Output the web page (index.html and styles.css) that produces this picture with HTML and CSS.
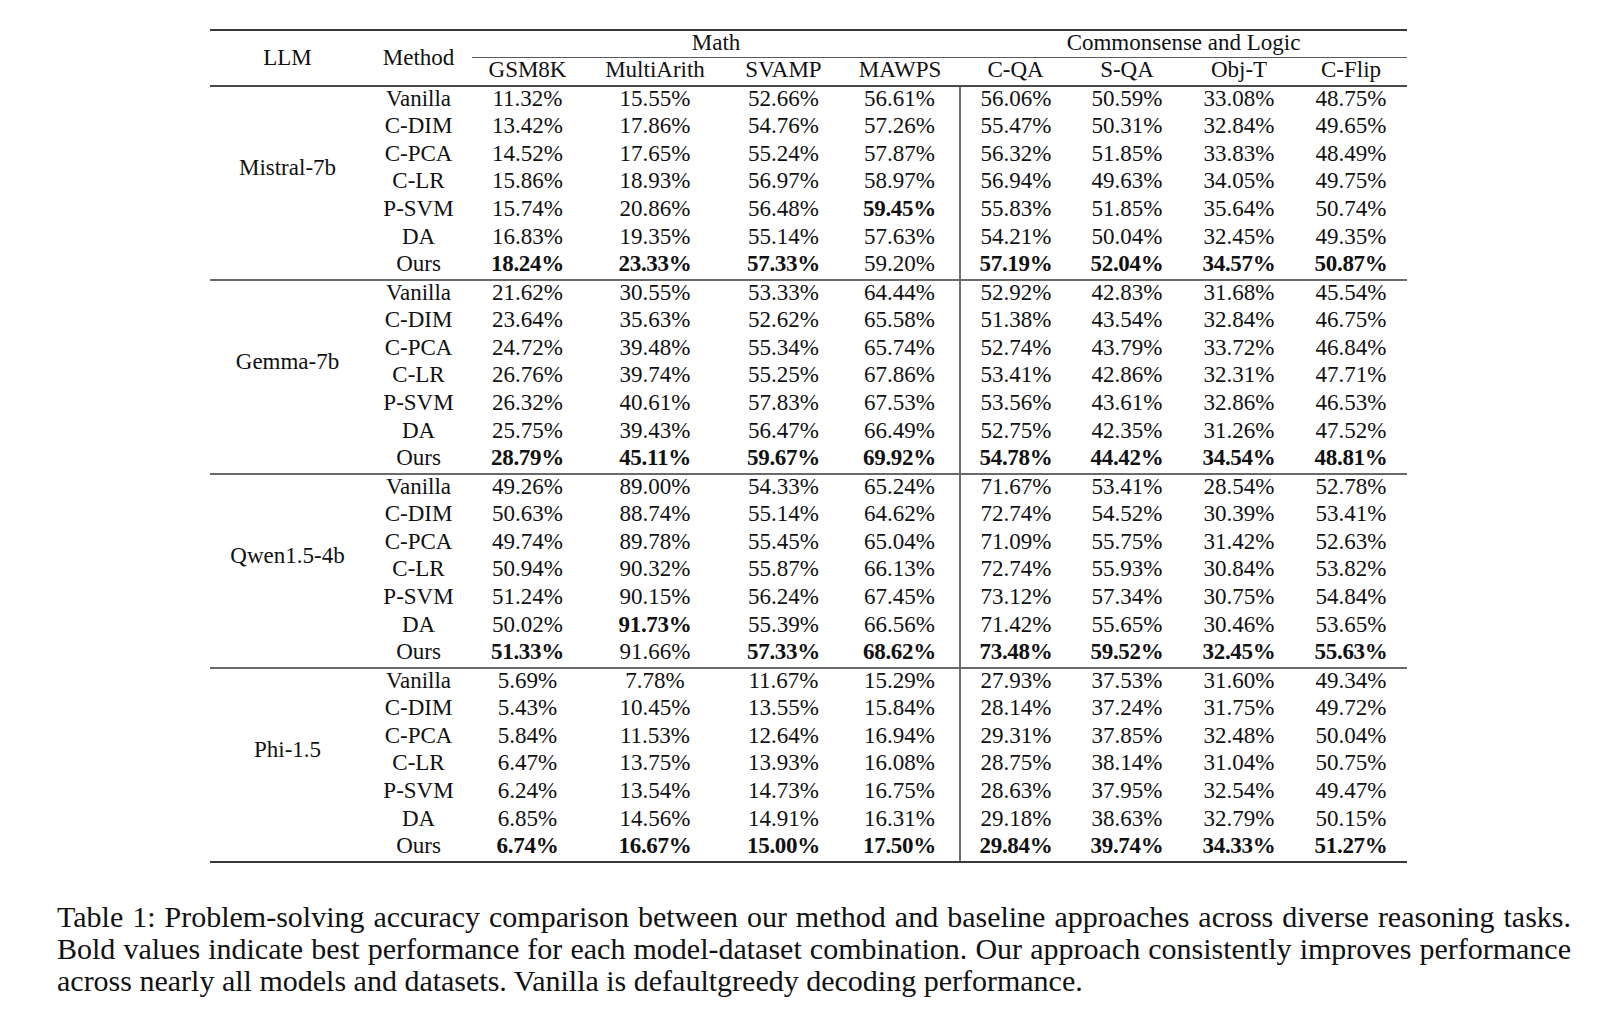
FILE: index.html
```html
<!DOCTYPE html>
<html>
<head>
<meta charset="utf-8">
<link rel="stylesheet" href="styles.css">
</head>
<body>
<div class="page">
  <table class="results">
    <colgroup>
      <col class="c-llm"><col class="c-method"><col class="c-gsm"><col class="c-multi"><col class="c-svamp"><col class="c-mawps"><col class="c-cqa"><col class="c-sqa"><col class="c-objt"><col class="c-flip">
    </colgroup>
    <thead>
      <tr class="h1">
        <th rowspan="2" class="hb">LLM</th>
        <th rowspan="2" class="hb">Method</th>
        <th colspan="4" class="grp">Math</th>
        <th colspan="4" class="grp">Commonsense and Logic</th>
      </tr>
      <tr class="h2">
        <th>GSM8K</th><th>MultiArith</th><th>SVAMP</th><th>MAWPS</th>
        <th>C-QA</th><th>S-QA</th><th>Obj-T</th><th>C-Flip</th>
      </tr>
    </thead>
    <tbody>
      <tr><td rowspan="7" class="llm">Mistral-7b</td><td>Vanilla</td><td>11.32%</td><td>15.55%</td><td>52.66%</td><td class="sep">56.61%</td><td>56.06%</td><td>50.59%</td><td>33.08%</td><td>48.75%</td></tr>
      <tr><td>C-DIM</td><td>13.42%</td><td>17.86%</td><td>54.76%</td><td class="sep">57.26%</td><td>55.47%</td><td>50.31%</td><td>32.84%</td><td>49.65%</td></tr>
      <tr><td>C-PCA</td><td>14.52%</td><td>17.65%</td><td>55.24%</td><td class="sep">57.87%</td><td>56.32%</td><td>51.85%</td><td>33.83%</td><td>48.49%</td></tr>
      <tr><td>C-LR</td><td>15.86%</td><td>18.93%</td><td>56.97%</td><td class="sep">58.97%</td><td>56.94%</td><td>49.63%</td><td>34.05%</td><td>49.75%</td></tr>
      <tr><td>P-SVM</td><td>15.74%</td><td>20.86%</td><td>56.48%</td><td class="sep b">59.45%</td><td>55.83%</td><td>51.85%</td><td>35.64%</td><td>50.74%</td></tr>
      <tr><td>DA</td><td>16.83%</td><td>19.35%</td><td>55.14%</td><td class="sep">57.63%</td><td>54.21%</td><td>50.04%</td><td>32.45%</td><td>49.35%</td></tr>
      <tr class="last"><td>Ours</td><td class="b">18.24%</td><td class="b">23.33%</td><td class="b">57.33%</td><td class="sep">59.20%</td><td class="b">57.19%</td><td class="b">52.04%</td><td class="b">34.57%</td><td class="b">50.87%</td></tr>
    </tbody>
    <tbody>
      <tr><td rowspan="7" class="llm">Gemma-7b</td><td>Vanilla</td><td>21.62%</td><td>30.55%</td><td>53.33%</td><td class="sep">64.44%</td><td>52.92%</td><td>42.83%</td><td>31.68%</td><td>45.54%</td></tr>
      <tr><td>C-DIM</td><td>23.64%</td><td>35.63%</td><td>52.62%</td><td class="sep">65.58%</td><td>51.38%</td><td>43.54%</td><td>32.84%</td><td>46.75%</td></tr>
      <tr><td>C-PCA</td><td>24.72%</td><td>39.48%</td><td>55.34%</td><td class="sep">65.74%</td><td>52.74%</td><td>43.79%</td><td>33.72%</td><td>46.84%</td></tr>
      <tr><td>C-LR</td><td>26.76%</td><td>39.74%</td><td>55.25%</td><td class="sep">67.86%</td><td>53.41%</td><td>42.86%</td><td>32.31%</td><td>47.71%</td></tr>
      <tr><td>P-SVM</td><td>26.32%</td><td>40.61%</td><td>57.83%</td><td class="sep">67.53%</td><td>53.56%</td><td>43.61%</td><td>32.86%</td><td>46.53%</td></tr>
      <tr><td>DA</td><td>25.75%</td><td>39.43%</td><td>56.47%</td><td class="sep">66.49%</td><td>52.75%</td><td>42.35%</td><td>31.26%</td><td>47.52%</td></tr>
      <tr class="last"><td>Ours</td><td class="b">28.79%</td><td class="b">45.11%</td><td class="b">59.67%</td><td class="sep b">69.92%</td><td class="b">54.78%</td><td class="b">44.42%</td><td class="b">34.54%</td><td class="b">48.81%</td></tr>
    </tbody>
    <tbody>
      <tr><td rowspan="7" class="llm">Qwen1.5-4b</td><td>Vanilla</td><td>49.26%</td><td>89.00%</td><td>54.33%</td><td class="sep">65.24%</td><td>71.67%</td><td>53.41%</td><td>28.54%</td><td>52.78%</td></tr>
      <tr><td>C-DIM</td><td>50.63%</td><td>88.74%</td><td>55.14%</td><td class="sep">64.62%</td><td>72.74%</td><td>54.52%</td><td>30.39%</td><td>53.41%</td></tr>
      <tr><td>C-PCA</td><td>49.74%</td><td>89.78%</td><td>55.45%</td><td class="sep">65.04%</td><td>71.09%</td><td>55.75%</td><td>31.42%</td><td>52.63%</td></tr>
      <tr><td>C-LR</td><td>50.94%</td><td>90.32%</td><td>55.87%</td><td class="sep">66.13%</td><td>72.74%</td><td>55.93%</td><td>30.84%</td><td>53.82%</td></tr>
      <tr><td>P-SVM</td><td>51.24%</td><td>90.15%</td><td>56.24%</td><td class="sep">67.45%</td><td>73.12%</td><td>57.34%</td><td>30.75%</td><td>54.84%</td></tr>
      <tr><td>DA</td><td>50.02%</td><td class="b">91.73%</td><td>55.39%</td><td class="sep">66.56%</td><td>71.42%</td><td>55.65%</td><td>30.46%</td><td>53.65%</td></tr>
      <tr class="last"><td>Ours</td><td class="b">51.33%</td><td>91.66%</td><td class="b">57.33%</td><td class="sep b">68.62%</td><td class="b">73.48%</td><td class="b">59.52%</td><td class="b">32.45%</td><td class="b">55.63%</td></tr>
    </tbody>
    <tbody>
      <tr><td rowspan="7" class="llm final-llm">Phi-1.5</td><td>Vanilla</td><td>5.69%</td><td>7.78%</td><td>11.67%</td><td class="sep">15.29%</td><td>27.93%</td><td>37.53%</td><td>31.60%</td><td>49.34%</td></tr>
      <tr><td>C-DIM</td><td>5.43%</td><td>10.45%</td><td>13.55%</td><td class="sep">15.84%</td><td>28.14%</td><td>37.24%</td><td>31.75%</td><td>49.72%</td></tr>
      <tr><td>C-PCA</td><td>5.84%</td><td>11.53%</td><td>12.64%</td><td class="sep">16.94%</td><td>29.31%</td><td>37.85%</td><td>32.48%</td><td>50.04%</td></tr>
      <tr><td>C-LR</td><td>6.47%</td><td>13.75%</td><td>13.93%</td><td class="sep">16.08%</td><td>28.75%</td><td>38.14%</td><td>31.04%</td><td>50.75%</td></tr>
      <tr><td>P-SVM</td><td>6.24%</td><td>13.54%</td><td>14.73%</td><td class="sep">16.75%</td><td>28.63%</td><td>37.95%</td><td>32.54%</td><td>49.47%</td></tr>
      <tr><td>DA</td><td>6.85%</td><td>14.56%</td><td>14.91%</td><td class="sep">16.31%</td><td>29.18%</td><td>38.63%</td><td>32.79%</td><td>50.15%</td></tr>
      <tr class="last final"><td>Ours</td><td class="b">6.74%</td><td class="b">16.67%</td><td class="b">15.00%</td><td class="sep b">17.50%</td><td class="b">29.84%</td><td class="b">39.74%</td><td class="b">34.33%</td><td class="b">51.27%</td></tr>
    </tbody>
  </table>
  <div class="caption">
    <span class="line">Table 1: Problem-solving accuracy comparison between our method and baseline approaches across diverse reasoning tasks.</span>
    <span class="line">Bold values indicate best performance for each model-dataset combination. Our approach consistently improves performance</span>
    <span class="line last-line">across nearly all models and datasets. Vanilla is defaultgreedy decoding performance.</span>
  </div>
</div>
</body>
</html>
```

FILE: styles.css
```css
html, body {
  margin: 0;
  padding: 0;
  background: #ffffff;
}

.page {
  width: 1623px;
  padding-top: 29px;
  font-family: "Liberation Serif", "Times New Roman", serif;
  color: #111111;
}

.results {
  margin-left: 210px;
  width: 1197px;
  border-collapse: collapse;
  table-layout: fixed;
  font-size: 23px;
}

.c-llm { width: 155px; }
.c-method { width: 107px; }
.c-gsm { width: 111px; }
.c-multi { width: 144px; }
.c-svamp { width: 113px; }
.c-mawps { width: 120px; }
.c-cqa { width: 111px; }
.c-sqa { width: 112px; }
.c-objt { width: 112px; }
.c-flip { width: 112px; }

.results th,
.results td {
  padding: 0;
  text-align: center;
  font-weight: normal;
  white-space: nowrap;
  line-height: 24px;
  vertical-align: middle;
}

.results .h1 th {
  border-top: 2px solid #3a3a3a;
  height: 26px;
  vertical-align: top;
}

.results .h1 th.hb {
  vertical-align: middle;
  border-bottom: 2px solid #4a4a4a;
}

.results .grp {
  border-bottom: 1.5px solid #5a5a5a;
}

.results .h2 th {
  height: 27px;
  border-bottom: 2px solid #4a4a4a;
  vertical-align: top;
}

.results tbody td {
  box-sizing: border-box;
  height: 27.6px;
  padding-bottom: 3px;
}

.results tbody td.llm {
  vertical-align: top;
  padding-top: 69px;
  padding-bottom: 0;
  border-bottom: 2px solid #6a6a6a;
}

.results tbody td.final-llm {
  border-bottom: 2px solid #3a3a3a;
}

.results td.sep {
  border-right: 2px solid #707070;
}

.results tr.last td {
  height: 26.4px;
  border-bottom: 2px solid #6a6a6a;
}

.results tr.final td {
  border-bottom: 2px solid #3a3a3a;
}

.results .b {
  font-weight: bold;
  letter-spacing: -0.3px;
}

.caption {
  margin-left: 57px;
  width: 1514px;
  margin-top: 38px;
  font-size: 30px;
  line-height: 32px;
}

.caption .line {
  display: block;
  text-align: justify;
  text-align-last: justify;
  white-space: nowrap;
}

.caption .last-line {
  text-align-last: left;
}
```
